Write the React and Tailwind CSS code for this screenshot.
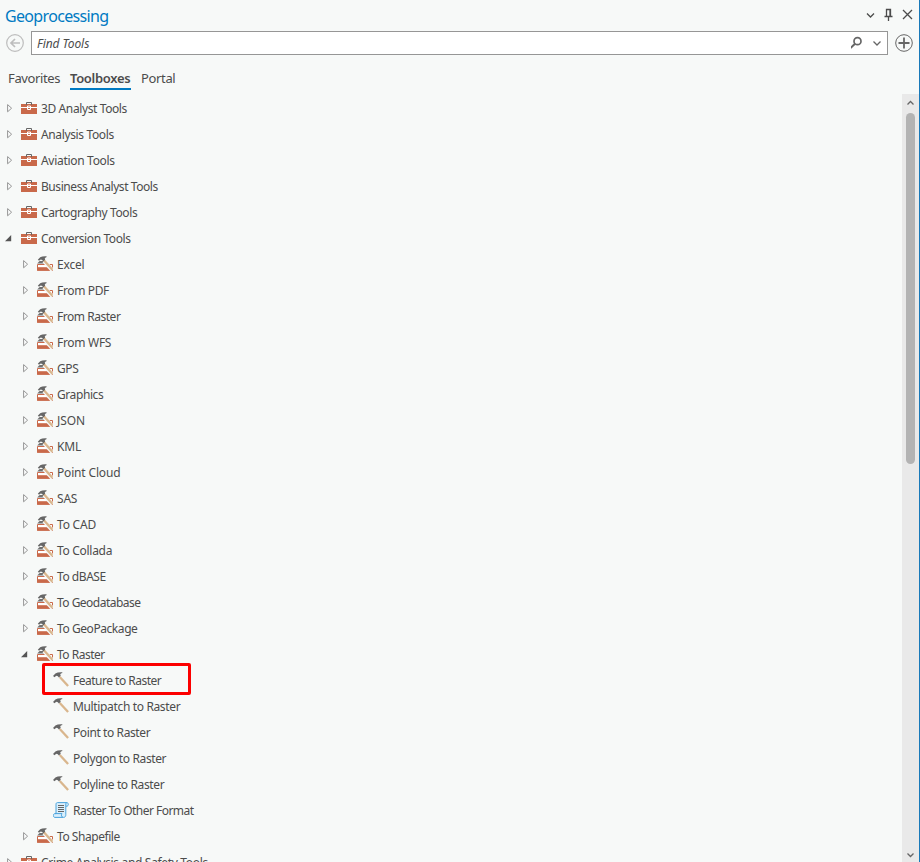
import React from "react";

const toolboxes = [
  ["3D Analyst Tools", "tracking-[-0.39px]"],
  ["Analysis Tools", "tracking-[-0.37px]"],
  ["Aviation Tools", "tracking-[-0.3px]"],
  ["Business Analyst Tools", "tracking-[-0.43px]"],
  ["Cartography Tools", "tracking-[-0.39px]"],
];
const toolsets = [
  ["Excel", "tracking-[-0.2px]"],
  ["From PDF", "tracking-[-0.35px]"],
  ["From Raster", "tracking-[-0.47px]"],
  ["From WFS", "tracking-[-0.3px]"],
  ["GPS", "tracking-[-0.4px]"],
  ["Graphics", "tracking-[-0.42px]"],
  ["JSON", "tracking-[-0.1px]"],
  ["KML", "tracking-[-0.2px]"],
  ["Point Cloud", "tracking-[-0.17px]"],
  ["SAS", "tracking-[-0.2px]"],
  ["To CAD", "tracking-[-0.2px]"],
  ["To Collada", "tracking-[-0.3px]"],
  ["To dBASE", "tracking-[-0.45px]"],
  ["To Geodatabase", "tracking-[-0.52px]"],
  ["To GeoPackage", "tracking-[-0.43px]"],
];
const rasterTools = [
  ["Feature to Raster", "tracking-[-0.5px]"],
  ["Multipatch to Raster", "tracking-[-0.35px]"],
  ["Point to Raster", "tracking-[-0.4px]"],
  ["Polygon to Raster", "tracking-[-0.38px]"],
  ["Polyline to Raster", "tracking-[-0.37px]"],
];

function Arrow({ open }) {
  return (
    <svg className="mb-[2px] h-4 w-4 shrink-0" viewBox="0 0 16 16">
      {open ? <path d="M10.2 5V11.2H4Z" fill="#555" /> : <path d="M6.6 4.6v7.2l4-3.6Z" fill="#fafbfb" stroke="#969696" />}
    </svg>
  );
}

function Toolbox() {
  return (
    <svg className="h-4 w-4" viewBox="0 0 16 16">
      <path d="M0 4h16v10H0Z" fill="#c9694a" />
      <path d="M5.5 5V2.5h5V5" fill="none" stroke="#666" />
      <path d="M0 7.5h16" stroke="#fff" />
      <path d="M6.5 6h3v3.5h-3Z" fill="#c9694a" stroke="#fff" />
      <path d="M7 7.5h2" stroke="#fff" />
    </svg>
  );
}

function Hammer() {
  return (
    <svg className="h-4 w-4" viewBox="0 0 16 16">
      <path d="m6.8 5 8.3 9" stroke="#d9b68d" strokeWidth="2.3" />
      <path d="M0 3.9 2.4 1.4Q4.5 0 9.2.2L9.4 1Q7.4 1.3 7.2 2.8L7.8 3.8 5.9 5.6 4.8 4.2Q3.5 3.2 2.6 4.2L1.6 5.2Z" fill="#666" />
    </svg>
  );
}

function Toolset() {
  return (
    <svg className="h-4 w-4" viewBox="0 0 16 16">
      <path d="M.5 8.5h15v5.7H.5Z" fill="#fff" stroke="#c9694a" />
      <path d="M0 11.2h16v3.5H0Z" fill="#c9694a" />
      <path d="M.2 7.6 2.6 5h4.6l2 2.6Z" fill="#707070" />
      <path d="m7 5 8.4 9.4" stroke="#f7f9f8" strokeWidth="4" />
      <path d="m6.5 3.8 8.9 9.9" stroke="#d9b68d" strokeWidth="2.3" />
      <path d="M.8 3.8 3.2 1.3Q5.2 0 9.4.2L9.7.9Q8 1.3 7.7 2.8L8.2 3.8 6.3 5.2 5.1 3.9Q3.8 3 2.9 4L2.1 4.7Z" fill="#666" />
    </svg>
  );
}

function Script() {
  return (
    <svg className="h-4 w-4" viewBox="0 0 16 16" fill="#d9effc" stroke="#4aa3dc">
      <path d="M4.5.6h9.3c2 0 2 3.6 0 3.6h-1v8.5c0 3-2.2 2.7-3 2.7H2c-2.2 0-2.2-3.8 0-3.8h1V2.3C3 1.2 3.6.6 4.5.6Z" />
      <path d="M12.8 4.2V2.1c0-.9.4-1.5 1.2-1.5M2 11.6h7c-1 1.5-.7 3.3 1 3.8" fill="none" />
      <path d="M5 3.5h6M5 5.5h6M5 7.5h6M5 9.5h6" stroke="#666" />
    </svg>
  );
}

const pads = ["pl-[1px]", "pl-[17px]", "pl-[33px]"];

function Row({ level = 0, open, arrow = true, icon, tracking, children }) {
  return (
    <div className={`flex h-[26px] shrink-0 items-center ${pads[level]}`}>
      {arrow ? <Arrow open={open} /> : <span className="w-4" />}
      <span className="mb-[2px] ml-1 h-4 w-4">{icon}</span>
      <span className={`ml-1 leading-4 whitespace-nowrap ${tracking}`}>{children}</span>
    </div>
  );
}

export default function App() {
  return (
    <div className="flex h-[862px] w-[920px] flex-col overflow-hidden border-r border-[#1979b9] bg-[#f7f9f8] font-['Noto_Sans',sans-serif] text-[12px] text-[#4c4c4c]">
      <header className="flex h-[31px] shrink-0 items-center justify-between px-[5px]">
        <h1 className="text-[16px] leading-5 tracking-[-0.67px] text-[#007ac2]">Geoprocessing</h1>
        <svg className="mb-[1px] h-4 w-[50px]" viewBox="0 0 50 16" fill="none" stroke="#4c4c4c" strokeWidth="1.3">
          <path d="m3 6.5 3.5 3.5L10 6.5" />
          <path d="M22.5 9V2.5h4V9M20.5 9.5h8M24.5 10v4M26 2v7" />
          <path d="m39 3 9 9m0-9-9 9" />
        </svg>
      </header>
      <div className="flex h-6 shrink-0 items-center">
        <svg className="ml-[6px] h-[18px] w-[18px]" viewBox="0 0 18 18" fill="none" stroke="#bdbdbd">
          <circle cx="9" cy="9" r="8.3" strokeWidth="1.2" /><path d="M14 9H5m4-4L5 9l4 4" strokeWidth="1.7" />
        </svg>
        <div className="ml-[7px] flex h-6 w-[857px] items-center border border-[#969696] bg-white pl-[5px]">
          <span className="grow pt-[2px] leading-4 tracking-[-0.05px] italic">Find Tools</span>
          <svg className="h-4 w-9" viewBox="0 0 36 16" fill="none" stroke="#666">
            <circle cx="6.5" cy="6.2" r="3.5" strokeWidth="1.7" /><path d="M4 8.7-.5 13" strokeWidth="2" /><path d="m22.5 6.5 3.5 3.5 3.5-3.5" strokeWidth="1.3" />
          </svg>
        </div>
        <svg className="ml-[7px] h-[18px] w-[18px]" viewBox="0 0 18 18" fill="none" stroke="#666">
          <circle cx="9" cy="9" r="8.3" /><path d="M9 3.5v11M3.5 9h11" strokeWidth="1.8" />
        </svg>
      </div>
      <nav className="flex h-[39px] shrink-0 items-start pt-[14px] pl-2 text-[13px] leading-[19px]">
        <span className="w-[62px] tracking-[-0.37px]">Favorites</span>
        <span className="h-[21px] w-[61px] border-b-2 border-[#007ac2] font-semibold tracking-[-0.32px] whitespace-nowrap">Toolboxes</span>
        <span className="ml-[10px] tracking-[-0.35px]">Portal</span>
      </nav>
      <div className="flex h-[768px]">
        <main className="flex grow flex-col overflow-hidden pt-[2px]">
          {toolboxes.map(([t, tracking]) => <Row key={t} tracking={tracking} icon={<Toolbox />}>{t}</Row>)}
          <Row open tracking="tracking-[-0.39px]" icon={<Toolbox />}>Conversion Tools</Row>
          {toolsets.map(([t, tracking]) => <Row key={t} level={1} tracking={tracking} icon={<Toolset />}>{t}</Row>)}
          <Row level={1} open tracking="tracking-[-0.5px]" icon={<Toolset />}>To Raster</Row>
          <div className="relative">
            {rasterTools.map(([t, tracking]) => <Row key={t} level={2} arrow={false} tracking={tracking} icon={<Hammer />}>{t}</Row>)}
            <div className="absolute top-[-5px] left-[42px] h-[32px] w-[149px] rounded-[2px] border-3 border-[#fc0000]" />
          </div>
          <Row level={2} arrow={false} tracking="tracking-[-0.52px]" icon={<Script />}>Raster To Other Format</Row>
          <Row level={1} tracking="tracking-[-0.45px]" icon={<Toolset />}>To Shapefile</Row>
          <Row tracking="tracking-[-0.33px]" icon={<Toolbox />}>Crime Analysis and Safety Tools</Row>
        </main>
        <aside className="flex w-[17px] shrink-0 flex-col items-center bg-[#e9e9e9]">
          <svg className="h-[19px] w-[17px]" viewBox="0 0 17 19" fill="none" stroke="#666" strokeWidth="1.3"><path d="m5.5 10.5 3-3 3 3" /></svg>
          <div className="h-[351px] w-[9px] rounded-full bg-[#b3b3b3]" />
          <svg className="mt-auto h-[17px] w-[17px]" viewBox="0 0 17 17" fill="none" stroke="#666" strokeWidth="1.3"><path d="m5.5 8.5 3 3 3-3" /></svg>
        </aside>
      </div>
    </div>
  );
}
